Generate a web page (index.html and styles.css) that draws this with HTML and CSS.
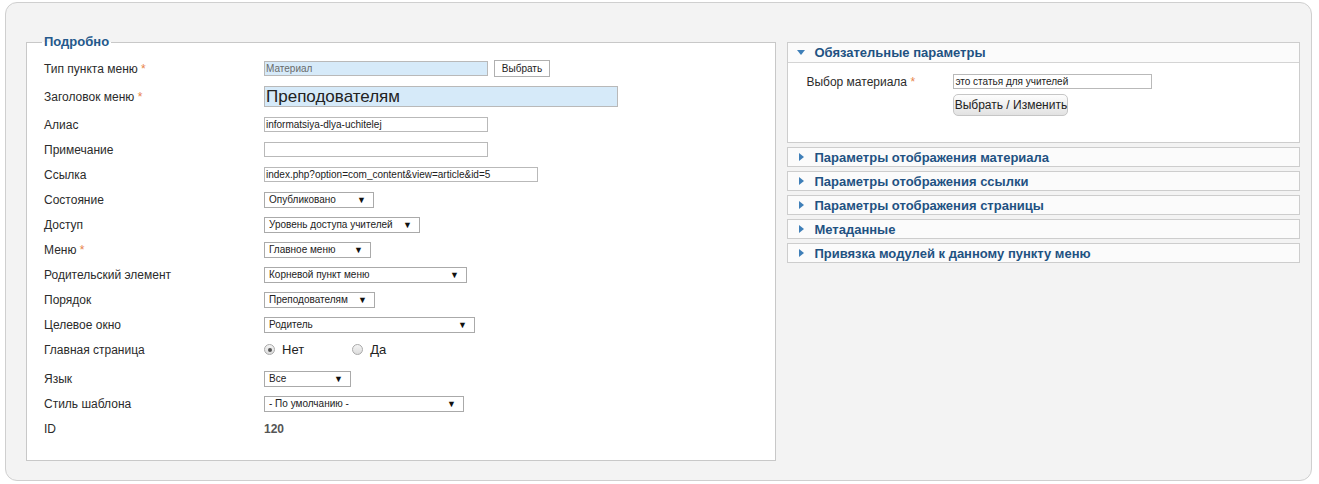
FILE: index.html
```html
<!DOCTYPE html>
<html lang="ru">
<head>
<meta charset="utf-8">
<title>Пункт меню</title>
<link rel="stylesheet" href="styles.css">
</head>
<body>
<div class="page">
  <fieldset class="details">
    <legend>Подробно</legend>
    <div class="row">
      <div class="label">Тип пункта меню <span class="star">*</span></div>
      <div class="field"><span class="input w224 readonly small">Материал</span><span class="btn-plain">Выбрать</span></div>
    </div>
    <div class="row tall">
      <div class="label">Заголовок меню <span class="star">*</span></div>
      <div class="field"><span class="input big">Преподователям</span></div>
    </div>
    <div class="row">
      <div class="label">Алиас</div>
      <div class="field"><span class="input w224">informatsiya-dlya-uchitelej</span></div>
    </div>
    <div class="row">
      <div class="label">Примечание</div>
      <div class="field"><span class="input w224"></span></div>
    </div>
    <div class="row">
      <div class="label">Ссылка</div>
      <div class="field"><span class="input w274">index.php?option=com_content&amp;view=article&amp;id=5</span></div>
    </div>
    <div class="row">
      <div class="label">Состояние</div>
      <div class="field"><span class="select s110">Опубликовано<i>▼</i></span></div>
    </div>
    <div class="row">
      <div class="label">Доступ</div>
      <div class="field"><span class="select s156">Уровень доступа учителей<i>▼</i></span></div>
    </div>
    <div class="row">
      <div class="label">Меню <span class="star">*</span></div>
      <div class="field"><span class="select s107">Главное меню<i>▼</i></span></div>
    </div>
    <div class="row">
      <div class="label">Родительский элемент</div>
      <div class="field"><span class="select s203">Корневой пункт меню<i>▼</i></span></div>
    </div>
    <div class="row">
      <div class="label">Порядок</div>
      <div class="field"><span class="select s111">Преподователям<i>▼</i></span></div>
    </div>
    <div class="row">
      <div class="label">Целевое окно</div>
      <div class="field"><span class="select s211">Родитель<i>▼</i></span></div>
    </div>
    <div class="row gapped">
      <div class="label">Главная страница</div>
      <div class="field radios">
        <span class="radio checked"></span><span class="radio-text no">Нет</span>
        <span class="radio"></span><span class="radio-text">Да</span>
      </div>
    </div>
    <div class="row">
      <div class="label">Язык</div>
      <div class="field"><span class="select s87">Все<i>▼</i></span></div>
    </div>
    <div class="row">
      <div class="label">Стиль шаблона</div>
      <div class="field"><span class="select s200">- По умолчанию -<i>▼</i></span></div>
    </div>
    <div class="row">
      <div class="label">ID</div>
      <div class="field"><span class="id-value">120</span></div>
    </div>
  </fieldset>

  <div class="panels">
    <div class="panel open">
      <div class="panel-head"><span class="tri down"></span>Обязательные параметры</div>
      <div class="panel-body">
        <div class="label req-label">Выбор материала <span class="star">*</span></div>
        <div class="req-field">
          <span class="input w199">это статья для учителей</span>
          <span class="btn-round">Выбрать / Изменить</span>
        </div>
      </div>
    </div>
    <div class="panel"><div class="panel-head"><span class="tri right"></span>Параметры отображения материала</div></div>
    <div class="panel"><div class="panel-head"><span class="tri right"></span>Параметры отображения ссылки</div></div>
    <div class="panel"><div class="panel-head"><span class="tri right"></span>Параметры отображения страницы</div></div>
    <div class="panel"><div class="panel-head"><span class="tri right"></span>Метаданные</div></div>
    <div class="panel"><div class="panel-head"><span class="tri right"></span>Привязка модулей к данному пункту меню</div></div>
  </div>
</div>
</body>
</html>
```

FILE: styles.css
```css
html, body {
  margin: 0;
  padding: 0;
  background: #ffffff;
  font-family: "Liberation Sans", Arial, sans-serif;
  color: #333;
}

.page {
  margin: 2px 0 0 5px;
  width: 1307px;
  height: 479px;
  box-sizing: border-box;
  border: 1px solid #cfcfcf;
  border-radius: 12px;
  background: #f3f3f3;
  display: flex;
  align-items: flex-start;
  padding: 32px 11px 0 20px;
  gap: 11px;
}

.details {
  margin: 0;
  width: 751px;
  box-sizing: border-box;
  border: 1px solid #c8c8c8;
  background: #fff;
  padding: 7px 10px 19px 17px;
  min-inline-size: 0;
}

.details legend {
  padding: 0 2px;
  margin-left: -2px;
  font-size: 13px;
  line-height: 14px;
  font-weight: bold;
  color: #24598c;
}

.row {
  display: flex;
  align-items: center;
  height: 25px;
}
.row.tall { height: 31px; }
.row.gapped { margin-bottom: 4px; }

.label {
  width: 220px;
  flex: none;
  font-size: 12px;
  color: #2b2b2b;
}
.star { color: #e8844a; }

.field {
  display: flex;
  align-items: center;
}

.input {
  display: inline-block;
  box-sizing: border-box;
  height: 15px;
  border: 1px solid #b9b9b9;
  background: #fff;
  font-size: 10px;
  line-height: 13px;
  padding: 0 1px;
  color: #222;
  white-space: nowrap;
  overflow: hidden;
}
.w224 { width: 224px; }
.w274 { width: 274px; }
.w199 { width: 199px; }
.input.readonly {
  background: #d6eaf9;
  color: #6a6a6a;
}
.input.big {
  width: 354px;
  height: 21px;
  background: #d6eaf9;
  font-size: 17px;
  line-height: 19px;
  color: #222;
}

.btn-plain {
  display: inline-block;
  box-sizing: border-box;
  margin-left: 6px;
  width: 56px;
  height: 17px;
  border: 1px solid #b0b0b0;
  background: #fff;
  font-size: 10px;
  line-height: 15px;
  text-align: center;
  color: #222;
}

.select {
  display: inline-flex;
  align-items: center;
  box-sizing: border-box;
  height: 16px;
  border: 1px solid #aaaaaa;
  background: #fff;
  font-size: 10px;
  color: #222;
  padding: 0 0 0 4px;
  white-space: nowrap;
}
.select i {
  font-style: normal;
  font-size: 9px;
  margin-left: auto;
  padding-right: 7px;
  color: #111;
}
.s87 { width: 87px; }
.s107 { width: 107px; }
.s110 { width: 110px; }
.s111 { width: 111px; }
.s156 { width: 156px; }
.s200 { width: 200px; }
.s203 { width: 203px; }
.s211 { width: 211px; }

.radios { height: 25px; }
.radio {
  display: inline-block;
  box-sizing: border-box;
  width: 11px;
  height: 11px;
  border-radius: 50%;
  border: 1px solid #a9a9a9;
  background: linear-gradient(#f4f4f4, #dcdcdc);
  position: relative;
}
.radio.checked::after {
  content: "";
  position: absolute;
  left: 2.5px;
  top: 2.5px;
  width: 4px;
  height: 4px;
  border-radius: 50%;
  background: #555;
}
.radio-text {
  font-size: 13px;
  color: #222;
  margin-left: 7px;
}
.radio-text.no { margin-right: 48px; }

.id-value {
  font-size: 12px;
  font-weight: bold;
  color: #555;
}

.panels {
  margin-top: 7px;
  width: 513px;
  display: flex;
  flex-direction: column;
  gap: 4px;
}
.panel {
  border: 1px solid #cdcdcd;
  background: #fff;
}
.panel-head {
  height: 18px;
  display: flex;
  align-items: center;
  padding-left: 9px;
  font-size: 13px;
  font-weight: bold;
  color: #1f5282;
  background: #fbfbfb;
}
.panel.open .panel-head {
  height: 19px;
  border-bottom: 1px solid #d4d4d4;
}
.tri {
  display: inline-block;
  width: 0;
  height: 0;
  margin-right: 10px;
}
.tri.right {
  border-top: 4px solid transparent;
  border-bottom: 4px solid transparent;
  border-left: 5px solid #3f7fb8;
  margin-left: 2px;
}
.tri.down {
  border-left: 4px solid transparent;
  border-right: 4px solid transparent;
  border-top: 5px solid #3f7fb8;
  margin-right: 9px;
}
.panel-body {
  height: 79px;
  display: flex;
  align-items: flex-start;
  padding: 11px 0 0 18px;
  box-sizing: border-box;
}
.req-label {
  width: 147px;
  padding-top: 1px;
}
.req-field {
  display: flex;
  flex-direction: column;
  align-items: flex-start;
  gap: 5px;
}
.btn-round {
  display: inline-block;
  box-sizing: border-box;
  width: 115px;
  height: 22px;
  border: 1px solid #c6c6c6;
  border-radius: 5px;
  background: linear-gradient(#fdfdfd, #e2e2e2);
  font-size: 12px;
  line-height: 20px;
  text-align: center;
  color: #222;
}
```
